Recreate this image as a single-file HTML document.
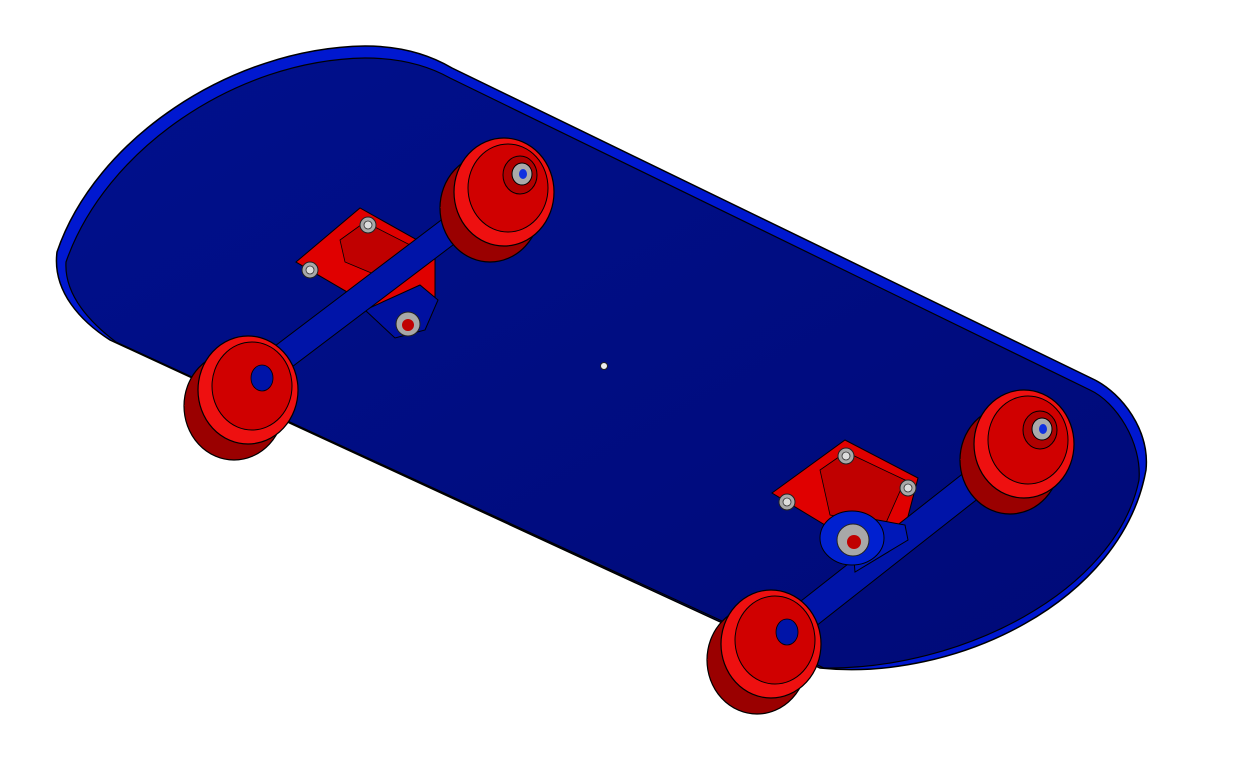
<!DOCTYPE html>
<html><head><style>html,body{margin:0;padding:0;background:#fff;}svg{display:block}</style></head><body>
<svg width="1233" height="778" viewBox="0 0 1233 778" xmlns="http://www.w3.org/2000/svg">
<defs>
<linearGradient id="face" x1="0" y1="0" x2="1" y2="1"><stop offset="0" stop-color="#00108c"/><stop offset="1" stop-color="#000a78"/></linearGradient>
<g id="wheel">
 <ellipse cx="-8" cy="10" rx="50" ry="54" fill="#9a0000" stroke="#000" stroke-width="1.2"/>
 <path d="M-58,10 L-44,-10 L40,-20 L50,14 Z" fill="#9a0000"/>
 <ellipse cx="6" cy="-6" rx="50" ry="54" fill="#ee1010" stroke="#000" stroke-width="1.2"/>
 <ellipse cx="10" cy="-10" rx="40" ry="44" fill="#d00000" stroke="#000" stroke-width="1"/>
</g>
<g id="hub">
 <ellipse cx="0" cy="0" rx="17" ry="19" fill="#b00000" stroke="#000" stroke-width="1"/>
 <ellipse cx="2" cy="-1" rx="10" ry="11" fill="#aaa" stroke="#000" stroke-width="1"/>
 <ellipse cx="3" cy="-1" rx="4" ry="5" fill="#1030e0"/>
</g>
<g id="nut"><circle r="8" fill="#a8a8a8" stroke="#222" stroke-width="1"/><circle r="4" fill="#ddd" stroke="#333" stroke-width="0.8"/></g>
</defs>
<path d="M452,68 C425,52 395,46 365,46 C230,48 95,140 57,252 C52,292 82,322 110,340 L820,668 C955,682 1122,602 1146,470 C1150,430 1122,394 1095,380 Z" fill="#0018d0" stroke="#000" stroke-width="1.5"/>
<path d="M450,78 C425,64 395,58 365,58 C235,60 105,150 66,262 C64,296 92,324 116,342 L824,668 C960,670 1116,592 1139,480 C1142,442 1116,402 1090,390 Z" fill="url(#face)" stroke="#000" stroke-width="1.2"/>
<!-- rear truck -->
<path d="M296,262 L360,208 L435,250 L435,300 L395,320 Z" fill="#e00000" stroke="#000" stroke-width="1"/>
<path d="M340,240 L365,222 L420,250 L400,285 L345,262 Z" fill="#c00000" stroke="#000" stroke-width="0.8"/>
<path d="M365,310 L420,285 L438,300 L425,330 L395,338 Z" fill="#0010a0" stroke="#000" stroke-width="1"/>
<use href="#nut" x="368" y="225"/><use href="#nut" x="310" y="270"/>
<circle cx="408" cy="324" r="12" fill="#a8a8a8" stroke="#222"/><circle cx="408" cy="325" r="6" fill="#c00000"/>
<line x1="255" y1="378" x2="490" y2="200" stroke="#000" stroke-width="28" stroke-linecap="round"/>
<line x1="255" y1="378" x2="490" y2="200" stroke="#0014a8" stroke-width="26" stroke-linecap="round"/>
<use href="#wheel" x="498" y="198"/><use href="#hub" x="520" y="175"/>
<use href="#wheel" x="242" y="396"/>
<ellipse cx="262" cy="378" rx="11" ry="13" fill="#0014a8" stroke="#000" stroke-width="0.8"/>
<!-- front truck -->
<path d="M772,493 L845,440 L918,478 L905,528 L830,528 Z" fill="#e00000" stroke="#000" stroke-width="1"/>
<path d="M820,470 L846,452 L905,480 L885,525 L830,515 Z" fill="#c00000" stroke="#000" stroke-width="0.8"/>
<use href="#nut" x="846" y="456"/><use href="#nut" x="908" y="488"/><use href="#nut" x="787" y="502"/>
<line x1="785" y1="632" x2="1010" y2="455" stroke="#000" stroke-width="30" stroke-linecap="round"/>
<line x1="785" y1="632" x2="1010" y2="455" stroke="#0014a8" stroke-width="28" stroke-linecap="round"/>
<path d="M850,515 L905,525 L908,540 L855,572 Z" fill="#0018b8" stroke="#000" stroke-width="1"/>
<ellipse cx="852" cy="538" rx="32" ry="27" fill="#0020d0" stroke="#000" stroke-width="1"/>
<circle cx="853" cy="540" r="16" fill="#a8a8a8" stroke="#222"/><circle cx="854" cy="542" r="7" fill="#c00000"/>
<use href="#wheel" x="1018" y="450"/><use href="#hub" x="1040" y="430"/>
<use href="#wheel" x="765" y="650"/>
<ellipse cx="787" cy="632" rx="11" ry="13" fill="#0014a8" stroke="#000" stroke-width="0.8"/>
<circle cx="604" cy="366" r="3.5" fill="#eee" stroke="#222" stroke-width="1"/>
</svg>
</body></html>
